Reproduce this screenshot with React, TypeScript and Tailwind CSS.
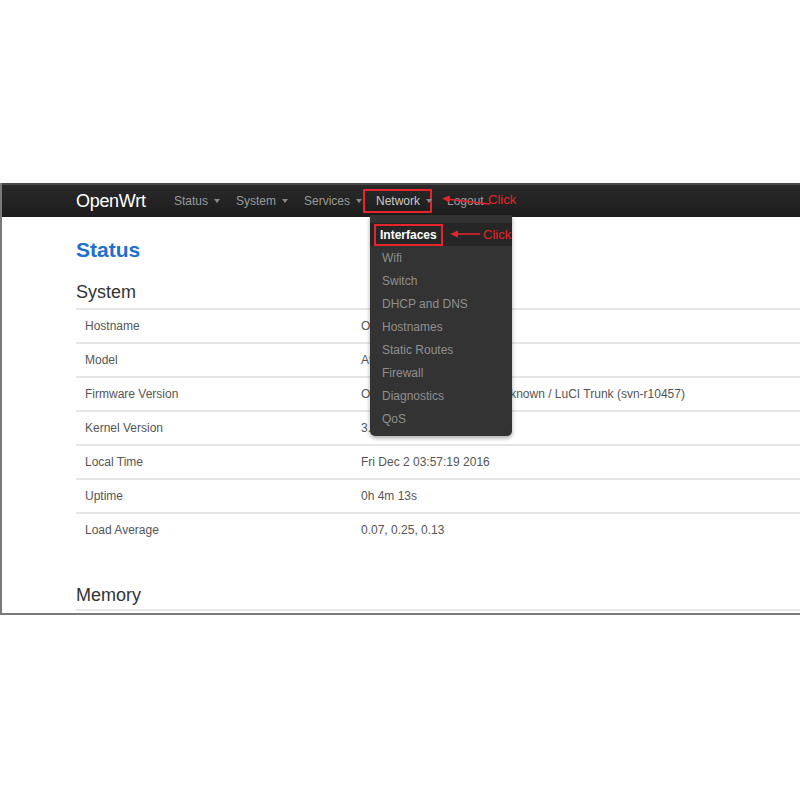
import React from "react";

const NAV: Array<[string, string]> = [
  ["Status", "w-[62px]"],
  ["System", "w-[68px]"],
  ["Services", "w-[59px]"],
];

const MENU = [
  "Wifi",
  "Switch",
  "DHCP and DNS",
  "Hostnames",
  "Static Routes",
  "Firewall",
  "Diagnostics",
  "QoS",
];

const ROWS: Array<[string, string]> = [
  ["Hostname", "OpenWrt"],
  ["Model", "Atheros AR9330 rev 1"],
  ["Firmware Version", "OpenWrt Barrier Breaker unknown / LuCI Trunk (svn-r10457)"],
  ["Kernel Version", "3.10.49"],
  ["Local Time", "Fri Dec 2 03:57:19 2016"],
  ["Uptime", "0h 4m 13s"],
  ["Load Average", "0.07, 0.25, 0.13"],
];

function Caret() {
  return <span className="ml-[6px] inline-block h-0 w-0 border-x-[3px] border-t-[4px] border-x-transparent border-t-[#8a8a8a] align-middle" />;
}

function LeftArrow({ width }: { width: number }) {
  return (
    <svg width={width} height="12" viewBox={`0 0 ${width} 12`}>
      <line x1="4" y1="6" x2={width} y2="6" stroke="#e5242b" strokeWidth="1.5" />
      <polygon points="0,6 8,2.5 8,9.5" fill="#e5242b" />
    </svg>
  );
}

export default function App() {
  return (
    <div className="relative h-[800px] w-[800px] overflow-hidden bg-white" style={{ fontFamily: '"Liberation Sans", Arial, sans-serif' }}>
      <div className="relative mt-[183px] h-[432px] overflow-hidden border-b-2 border-l-2 border-[#7a7a7a]">
        {/* navbar */}
        <div className="flex h-[34px] items-center border-t-2 border-[#4a4a4a] bg-gradient-to-b from-[#2a2a2a] to-[#1c1c1c] pl-[74px]">
          <span className="w-[98px] text-[18px] tracking-[-0.3px] text-white">OpenWrt</span>
          <div className="flex items-center text-[12px] text-[#9a9a9a]">
            {NAV.map(([n, w]) => (
              <span key={n} className={`flex items-center ${w}`}>
                {n}
                <Caret />
              </span>
            ))}
            <span className="flex h-[24px] w-[69px] items-center border-2 border-[#e5242b] pl-[11px] text-[#c8c8c8]">
              Network
              <Caret />
            </span>
            <span className="ml-[15px] text-[#9a9a9a]">Logout</span>
          </div>
        </div>

        {/* content */}
        <div className="pl-[74px]">
          <h1 className="pt-[21px] text-[21px] font-bold leading-[24px] text-[#1f6fcf]">Status</h1>
          <h2 className="mt-[19px] text-[18px] leading-[22px] text-[#333]">System</h2>
          <div className="mt-[5px]">
            {ROWS.map(([k, v]) => (
              <div key={k} className="flex h-[34px] items-center border-t-2 border-[#e6e6e6] text-[12px] text-[#555]">
                <span className="w-[285px] pl-[9px]">{k}</span>
                <span className="whitespace-nowrap">{v}</span>
              </div>
            ))}
          </div>
          <h2 className="mt-[38px] text-[18px] leading-[22px] text-[#333]">Memory</h2>
          <div className="mt-[3px] border-t-2 border-[#e6e6e6]" />
        </div>

        {/* logout annotation */}
        <div className="absolute left-[440px] top-[11px]">
          <svg width="50" height="12" viewBox="0 0 50 12">
            <line x1="4" y1="5" x2="48" y2="10" stroke="#e5242b" strokeWidth="1.3" />
            <polygon points="0,4.5 8,1.5 7.5,8.5" fill="#e5242b" />
          </svg>
        </div>
        <span className="absolute left-[486px] top-[7px] text-[13px] text-[#e5242b]">Click</span>

        {/* dropdown */}
        <div className="absolute left-[368px] top-[32px] w-[142px] rounded-b-[5px] bg-[#333333] pb-[6px] pt-[8px] shadow-[0_2px_4px_rgba(0,0,0,0.35)]">
          <div className="flex h-[23px] items-center bg-[#262626] pl-[4px]">
            <span className="flex h-[22px] items-center border-2 border-[#e5242b] px-[4px] text-[12px] font-bold text-white">Interfaces</span>
          </div>
          {MENU.map((m) => (
            <div key={m} className="flex h-[23px] items-center pl-[12px] text-[12px] text-[#8f8f8f]">
              {m}
            </div>
          ))}
        </div>

        {/* interfaces annotation */}
        <div className="absolute left-[448px] top-[45px]">
          <LeftArrow width={30} />
        </div>
        <span className="absolute left-[481px] top-[42px] text-[13px] text-[#e5242b]">Click</span>
      </div>
    </div>
  );
}
